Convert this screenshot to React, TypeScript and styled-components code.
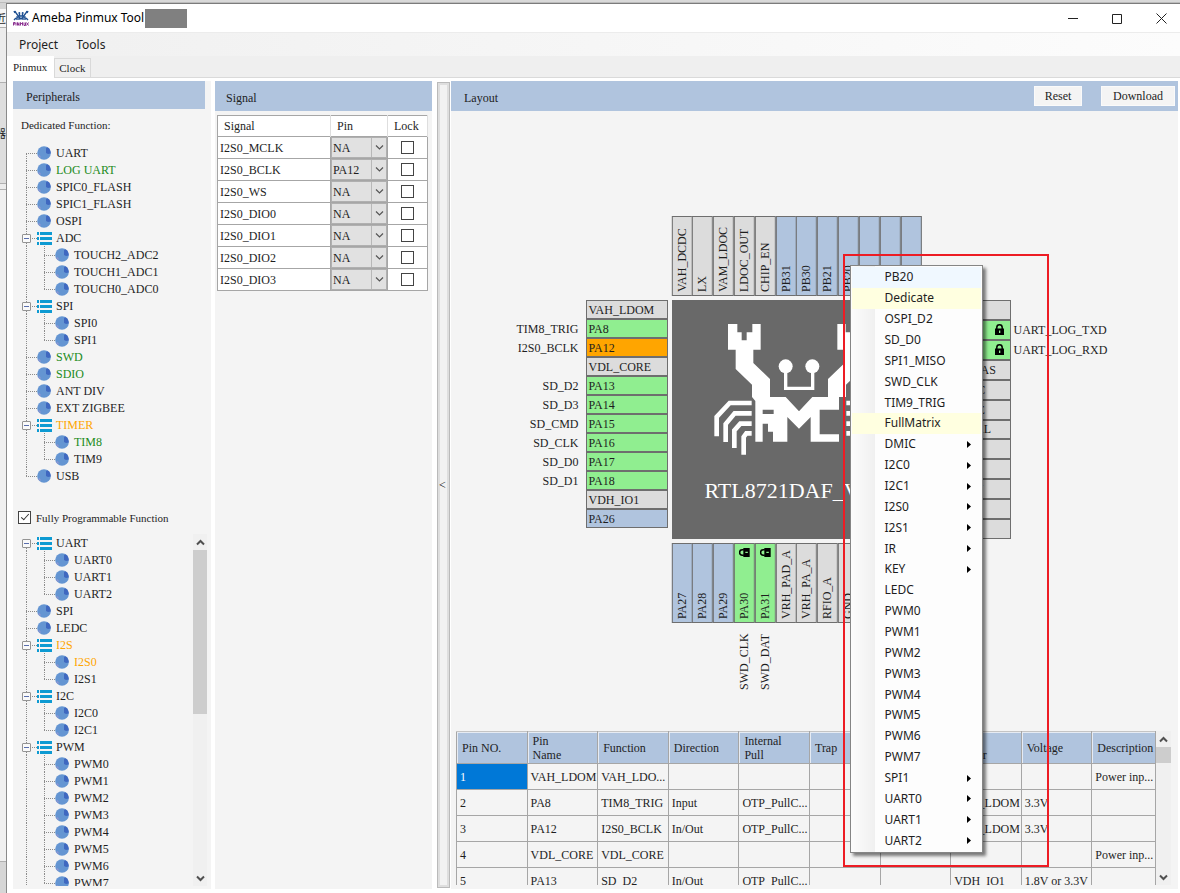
import React from "react";
import styled, { createGlobalStyle, css } from "styled-components";

const serif = '"Liberation Serif", "Times New Roman", serif';
const sans = '"Noto Sans", "Open Sans", "Noto Sans CJK SC", sans-serif';

const c = {
  panel: "#f4f4f4",
  header: "#b0c4de",
  ink: "#1e1e1e",
  grid: "#a6a6a6",
  chip: "#696969",
  green: "#90ee90",
  orange: "#ffa500",
  grey: "#dcdcdc",
};

const GlobalStyle = createGlobalStyle`
  *, *::before, *::after { box-sizing: border-box; }
  html, body { margin: 0; }
  body { font-family: ${serif}; font-size: 12px; line-height: 14px; color: ${c.ink}; overflow: hidden; }
  button, select, input { font: inherit; color: inherit; margin: 0; }
  ul { list-style: none; margin: 0; padding: 0; }
`;

/* ---------- window frame ---------- */

const Desktop = styled.div`
  display: grid;
  grid-template-columns: 6px minmax(0, 1fr);
  grid-template-rows: 3px minmax(0, 1fr);
  height: 100vh;
  background: #d9d9d9;
`;

const DesktopTop = styled.div`
  grid-column: 1 / -1;
  border-bottom: 1px solid #bcbcbc;
`;

const DesktopEdge = styled.div`
  display: flex;
  flex-direction: column;
  overflow: hidden;
  white-space: nowrap;
  font-family: "Noto Sans CJK SC", sans-serif;
  font-size: 11px;
`;

const EdgeBlock = styled.div<{ $h?: number; $bg: string; $line?: boolean }>`
  ${(p) => (p.$h ? `height: ${p.$h}px;` : "flex: 1;")}
  background: ${(p) => p.$bg};
  border-bottom: ${(p) => (p.$line ? "1px solid #b0b0b0" : "0")};
  display: flex;
  align-items: center;
  justify-content: flex-end;
`;

const Window = styled.div`
  display: flex;
  flex-direction: column;
  min-height: 0;
  background: #fff;
  border-top: 1px solid #7b7b7b;
  border-left: 1px solid #8a8a8a;
`;

const TitleBar = styled.header`
  display: flex;
  align-items: center;
  height: 28px;
  padding: 0 9px 0 6px;
  font-family: ${sans};
  color: #000;
`;

const TitleText = styled.h1`
  margin: 0 1px 0 3px;
  font-size: 12px;
  font-weight: 400;
  line-height: 20px;
`;

const Redacted = styled.span`
  width: 42px;
  height: 19px;
  background: #808080;
`;

const WindowControls = styled.div`
  display: flex;
  gap: 24px;
  margin-left: auto;
`;

const ControlButton = styled.button`
  display: grid;
  place-items: center;
  width: 20px;
  height: 20px;
  padding: 0;
  border: 0;
  background: none;
`;

const MenuBar = styled.nav`
  display: flex;
  gap: 18px;
  height: 24px;
  padding-left: 12px;
  border-top: 1px solid #ececec;
  background: linear-gradient(to right, #f0f0f0, #fcfcfc);
  font-family: ${sans};
`;

const MenuBarItem = styled.button`
  padding: 0;
  border: 0;
  background: none;
`;

const TabStrip = styled.div`
  display: flex;
  align-items: flex-end;
  height: 22px;
  background: #efefef;
  border-bottom: 1px solid #dadada;
`;

const Tab = styled.button<{ $active?: boolean }>`
  height: ${(p) => (p.$active ? 22 : 19)}px;
  margin-bottom: ${(p) => (p.$active ? -1 : 0)}px;
  padding: ${(p) => (p.$active ? "0 6px 2px 5px" : "0 4px")};
  border: 1px solid ${(p) => (p.$active ? "#fff" : "#d9d9d9")};
  border-bottom: 0;
  background: ${(p) => (p.$active ? "#fff" : "#f0f0f0")};
  font-size: 11px;
`;

const Workspace = styled.main`
  flex: 1;
  display: grid;
  grid-template-columns: 198px 217px 13px minmax(0, 1fr);
  min-height: 0;
  padding: 3px 2px 4px 6px;
`;

const Panel = styled.section`
  display: flex;
  flex-direction: column;
  min-width: 0;
  min-height: 0;
  background: ${c.panel};
`;

const PeripheralPanel = styled(Panel)`
  padding-bottom: 3px;
`;

const SignalPanel = styled(Panel)`
  margin: 0 -4px 0 4px;
`;

const LayoutPanel = styled(Panel)`
  margin-left: 10px;
`;

const PanelHeader = styled.div<{ $short?: boolean }>`
  display: flex;
  align-items: center;
  gap: 19px;
  flex: none;
  height: ${(p) => (p.$short ? 28 : 30)}px;
  margin-right: ${(p) => (p.$short ? 6 : 0)}px;
  padding: 0 3px 0 13px;
  background: ${c.header};
`;

const PanelTitle = styled.h2<{ $wide?: boolean }>`
  flex: 1;
  margin: 4px 0 0 ${(p) => (p.$wide ? 0 : -2)}px;
  font-size: 12px;
  font-weight: 400;
`;

const HeaderButton = styled.button<{ $w: number }>`
  width: ${(p) => p.$w}px;
  height: 20px;
  padding: 0;
  border: 1px solid #fafafa;
  background: ${c.panel};
`;

/* ---------- peripheral trees ---------- */

const SectionLabel = styled.p`
  margin: 9px 8px 11px;
  font-size: 11px;
  line-height: 15px;
`;

const CheckLabel = styled.label`
  display: flex;
  align-items: flex-start;
  gap: 5px;
  height: 50px;
  padding: 27px 5px 0;
  font-size: 11px;
`;

const CheckBox = styled.input`
  appearance: none;
  position: relative;
  width: 13px;
  height: 13px;
  border: 1px solid #444;
  background: #fff;
  vertical-align: middle;

  &:checked::after {
    content: "";
    position: absolute;
    left: 4px;
    top: 0;
    width: 4px;
    height: 8px;
    border: solid #333;
    border-width: 0 1px 1px 0;
    transform: rotate(42deg);
  }
`;

const TreeList = styled.ul`
  padding-left: 5px;
`;

const TreeRow = styled.li<{ $tone?: Tone }>`
  display: flex;
  align-items: center;
  height: 17px;
  color: ${(p) => (p.$tone === "used" ? "#228b22" : p.$tone === "warn" ? "#ffa500" : c.ink)};
`;

type Line = "none" | "through" | "tee" | "start" | "end";

const Gutter = styled.span<{ $line: Line }>`
  position: relative;
  flex: none;
  width: 18px;
  height: 17px;

  &::before {
    content: "";
    position: absolute;
    left: 8px;
    top: ${(p) => (p.$line === "start" ? 9 : 0)}px;
    height: ${(p) => (p.$line === "end" ? 9 : p.$line === "start" ? 8 : 17)}px;
    border-left: ${(p) => (p.$line === "none" ? "0" : "1px dotted #8c8c8c")};
  }
  &::after {
    content: "";
    position: absolute;
    left: 8px;
    right: -1px;
    top: 9px;
    border-top: ${(p) => (p.$line === "none" || p.$line === "through" ? "0" : "1px dotted #8c8c8c")};
  }
`;

const Expander = styled.button`
  position: absolute;
  z-index: 1;
  left: 4px;
  top: 5px;
  width: 9px;
  height: 9px;
  padding: 0;
  border: 1px solid #949494;
  border-radius: 1px;
  background: linear-gradient(#5a6fae, #5a6fae) center / 5px 1px no-repeat #fafafa;
`;

const NodeIcon = styled.svg`
  flex: none;
  width: 14px;
  height: 14px;
  margin: 0 5px 0 1px;
`;

const GroupIcon = styled(NodeIcon)`
  width: 16px;
  height: 14px;
  margin: 0 4px 0 0;
`;

const NodeLabel = styled.span`
  white-space: nowrap;
`;

const ScrollTree = styled.div`
  flex: 1;
  display: grid;
  grid-template-columns: minmax(0, 1fr) 14px;
  min-height: 0;
  margin-right: 4px;
  overflow: hidden;
`;

const Clip = styled.div`
  min-height: 0;
  overflow: hidden;
`;

const ScrollBar = styled.div`
  display: flex;
  flex-direction: column;
  min-height: 0;
  background: #f0f0f0;
`;

const ScrollArrow = styled.button`
  display: grid;
  place-items: center;
  flex: none;
  height: 16px;
  padding: 0;
  border: 0;
  background: none;
`;

const ScrollThumb = styled.div<{ $h: string }>`
  height: ${(p) => p.$h};
  background: #cdcdcd;
`;

const ScrollSpace = styled.div`
  flex: 1;
`;

type Tone = "used" | "warn";
type Node = { name: string; tone?: Tone; children?: Node[] };

const n = (name: string, tone?: Tone): Node => ({ name, tone });

const dedicated: Node[] = [
  n("UART"),
  n("LOG UART", "used"),
  n("SPIC0_FLASH"),
  n("SPIC1_FLASH"),
  n("OSPI"),
  { name: "ADC", children: [n("TOUCH2_ADC2"), n("TOUCH1_ADC1"), n("TOUCH0_ADC0")] },
  { name: "SPI", children: [n("SPI0"), n("SPI1")] },
  n("SWD", "used"),
  n("SDIO", "used"),
  n("ANT DIV"),
  n("EXT ZIGBEE"),
  { name: "TIMER", tone: "warn", children: [n("TIM8", "used"), n("TIM9")] },
  n("USB"),
];

const programmable: Node[] = [
  { name: "UART", children: [n("UART0"), n("UART1"), n("UART2")] },
  n("SPI"),
  n("LEDC"),
  { name: "I2S", tone: "warn", children: [n("I2S0", "warn"), n("I2S1")] },
  { name: "I2C", children: [n("I2C0"), n("I2C1")] },
  { name: "PWM", children: [0, 1, 2, 3, 4, 5, 6, 7].map((i) => n("PWM" + i)) },
];

function LeafMark() {
  return (
    <NodeIcon viewBox="0 0 14 14" aria-hidden>
      <circle cx="7" cy="7" r="6.8" fill="#6495d2" />
      <path d="M9 7V2.200L10.500 1.200A6.800 6.800 0 0 1 13.700 7.500L11 8Z" fill="#3f68c0" />
      <path d="M2.500 9l1.500 2-1 1A6.800 6.800 0 0 1 1 10Z" fill="#8a96d2" />
    </NodeIcon>
  );
}

function GroupMark() {
  return (
    <GroupIcon viewBox="0 0 16 14" aria-hidden>
      <path d="M1 1h2v3H1zM4 1h12v3H4zM1 6h2v3H1zM4 6h12v3H4zM1 11h2v3H1zM4 11h12v3H4z" fill="#0d9ad2" />
    </GroupIcon>
  );
}

function Tree({ nodes, label, open }: { nodes: Node[]; label: string; open?: boolean }) {
  const lastRoot = nodes.length - 1;
  return (
    <TreeList aria-label={label}>
      {nodes.map((node, i) => {
        const isLast = i === lastRoot && !open;
        const line: Line = i === 0 ? "start" : isLast ? "end" : "tee";
        return (
          <React.Fragment key={node.name}>
            <TreeRow $tone={node.tone}>
              <Gutter $line={line}>
                {node.children && <Expander aria-label={`Collapse ${node.name}`} />}
              </Gutter>
              {node.children ? <GroupMark /> : <LeafMark />}
              <NodeLabel>{node.name}</NodeLabel>
            </TreeRow>
            {node.children?.map((kid, k) => (
              <TreeRow key={kid.name} $tone={kid.tone}>
                <Gutter $line={isLast ? "none" : "through"} />
                <Gutter $line={k === node.children!.length - 1 ? "end" : "tee"} />
                <LeafMark />
                <NodeLabel>{kid.name}</NodeLabel>
              </TreeRow>
            ))}
          </React.Fragment>
        );
      })}
    </TreeList>
  );
}

function Chevron({ dir, size = 9, color = "#505050", weight = 2 }: { dir: "up" | "down"; size?: number; color?: string; weight?: number }) {
  return (
    <svg width={size} height={size} viewBox="0 0 9 9" fill="none" stroke={color} strokeWidth={weight} aria-hidden>
      <path d={dir === "up" ? "M1 6.500L4.500 3L8 6.500" : "M1 2.500L4.500 6L8 2.500"} />
    </svg>
  );
}

function Scroller({ thumb }: { thumb: string }) {
  return (
    <ScrollBar>
      <ScrollArrow aria-label="Scroll up">
        <Chevron dir="up" />
      </ScrollArrow>
      <ScrollThumb $h={thumb} />
      <ScrollSpace />
      <ScrollArrow aria-label="Scroll down">
        <Chevron dir="down" />
      </ScrollArrow>
    </ScrollBar>
  );
}

/* ---------- signal table ---------- */

const SignalTable = styled.table`
  width: 211px;
  margin: 4px 0 0 2px;
  border-collapse: collapse;
  table-layout: fixed;
  background: #fff;
  border: 1px solid ${c.grid};

  col:nth-child(2) { width: 57px; }
  col:nth-child(3) { width: 40px; }

  th {
    height: 21px;
    padding: 0 6px;
    border-right: 1px solid #dedede;
    text-align: left;
    font-weight: 400;
  }
  td {
    height: 22px;
    padding: 0 0 0 2px;
    border: 1px solid ${c.grid};
  }
  td:nth-child(2) { padding: 0; }
  td:nth-child(3) { padding: 0 0 1px; text-align: center; line-height: 13px; }
`;

const SelectBox = styled.span`
  display: grid;
  grid-template-columns: 1fr 15px;
  align-items: stretch;
  height: 21px;
  border: 1px solid #b0b0b0;
  background: #e1e1e1;
`;

const PinSelect = styled.select`
  appearance: none;
  min-width: 0;
  padding: 0 0 0 1px;
  border: 0;
  background: none;
`;

const SelectArrow = styled.span`
  display: grid;
  place-items: center;
  border-left: 1px solid #b8b8b8;
  pointer-events: none;
`;

const signals = [
  ["I2S0_MCLK", "NA"],
  ["I2S0_BCLK", "PA12"],
  ["I2S0_WS", "NA"],
  ["I2S0_DIO0", "NA"],
  ["I2S0_DIO1", "NA"],
  ["I2S0_DIO2", "NA"],
  ["I2S0_DIO3", "NA"],
];

const Splitter = styled.button`
  z-index: 1;
  margin: 1px -9px 1px 9px;
  padding: 0 2px 0 0;
  border: 1px solid #bababa;
  background: #f2f2f2;
  box-shadow: inset 0 0 0 2px #dedede;
  font-size: 12px;
  color: #000;
`;

/* ---------- chip diagram ---------- */

const Diagram = styled.div`
  flex: 1;
  display: grid;
  grid-template-columns: minmax(0, 1fr) 250px minmax(0, 1fr);
  grid-template-rows: 80px 239px auto;
  gap: 4px;
  min-height: 0;
  padding: 105px 36px 0 0;
`;

const TopPins = styled.div`
  grid-column: 2;
  display: flex;
`;

const SidePins = styled.ul<{ $side: "left" | "right" }>`
  grid-row: 2;
  grid-column: ${(p) => (p.$side === "left" ? 1 : 3)};
  display: flex;
  flex-direction: column;

  li {
    display: flex;
    align-items: center;
    gap: ${(p) => (p.$side === "left" ? 7 : 3)}px;
    justify-content: ${(p) => (p.$side === "left" ? "flex-end" : "flex-start")};
    ${(p) => (p.$side === "left" ? "height: 19px;" : "flex: 1;")}
  }
`;

type PinKind = "power" | "free" | "used" | "active";

const pinFill = {
  power: c.grey,
  free: c.header,
  used: c.green,
  active: c.orange,
};

const PinBox = styled.span<{ $kind: PinKind; $w: number; $inset: number }>`
  display: flex;
  align-items: center;
  justify-content: space-between;
  align-self: stretch;
  width: ${(p) => p.$w}px;
  padding: 0 5px 0 ${(p) => p.$inset}px;
  border: 1px solid #6e6e6e;
  background: ${(p) => pinFill[p.$kind]};
`;

const upright = css`
  writing-mode: vertical-rl;
  transform: rotate(180deg);
  white-space: nowrap;
`;

const PinColumn = styled.div`
  flex: 1;
  min-width: 0;
`;

const VerticalPin = styled.div<{ $kind: PinKind }>`
  ${upright}
  display: flex;
  align-items: center;
  justify-content: space-between;
  width: 100%;
  height: 80px;
  padding: 3px 0;
  border: 1px solid #6e6e6e;
  background: ${(p) => pinFill[p.$kind]};
  overflow: hidden;
`;

const VerticalNet = styled.div`
  ${upright}
  display: flex;
  align-items: center;
  width: 100%;
  height: 67px;
`;

const BottomPins = styled(TopPins)`
  grid-row: 3;
`;

const Chip = styled.div`
  position: relative;
  grid-row: 2;
  grid-column: 2;
  background: ${c.chip};
`;

const ChipFace = styled.div`
  display: flow-root;
`;

const ChipArt = styled.svg`
  display: block;
  width: 170px;
  height: 132px;
  margin: 24px 0 0 42px;
`;

const ChipName = styled.div`
  margin-top: 23px;
  padding-left: 33px;
  color: #fff;
  font-size: 22px;
  line-height: 24px;
  white-space: nowrap;
`;

const Highlight = styled.div`
  position: absolute;
  z-index: 3;
  left: 171px;
  top: -46px;
  width: 206px;
  height: 613px;
  border: 2px solid #ed1c24;
  pointer-events: none;
`;

const ContextMenu = styled.div`
  position: absolute;
  z-index: 4;
  left: 178px;
  top: -35px;
  display: flex;
  flex-direction: column;
  width: 133px;
  height: 588px;
  padding: 1px;
  border: 1px solid #858585;
  background: linear-gradient(to right, #fcfcfc, #f0f0f0 24px, #fdfdfd 24px);
  box-shadow: 3px 3px 3px rgba(0, 0, 0, 0.5);
  font-family: ${sans};
`;

const MenuItem = styled.button<{ $bg?: string }>`
  flex: 1;
  display: flex;
  align-items: center;
  justify-content: space-between;
  padding: 0 10px 0 33px;
  border: 0;
  background: ${(p) => p.$bg ?? "transparent"};
  line-height: 16px;
`;

type Pin = { name?: string; kind: PinKind; net?: string; lock?: boolean };
const p = (kind: PinKind, name?: string, net?: string, lock?: boolean): Pin => ({ kind, name, net, lock });

const topPins: Pin[] = [
  p("power", "VAH_DCDC"),
  p("power", "LX"),
  p("power", "VAM_LDOC"),
  p("power", "LDOC_OUT"),
  p("power", "CHIP_EN"),
  p("free", "PB31"),
  p("free", "PB30"),
  p("free", "PB21"),
  p("free", "PB20"),
  p("free"),
  p("free"),
  p("free"),
];

const leftPins: Pin[] = [
  p("power", "VAH_LDOM"),
  p("used", "PA8", "TIM8_TRIG"),
  p("active", "PA12", "I2S0_BCLK"),
  p("power", "VDL_CORE"),
  p("used", "PA13", "SD_D2"),
  p("used", "PA14", "SD_D3"),
  p("used", "PA15", "SD_CMD"),
  p("used", "PA16", "SD_CLK"),
  p("used", "PA17", "SD_D0"),
  p("used", "PA18", "SD_D1"),
  p("power", "VDH_IO1"),
  p("free", "PA26"),
];

const rightPins: Pin[] = [
  p("power"),
  p("used", "", "UART_LOG_TXD", true),
  p("used", "", "UART_LOG_RXD", true),
  p("power", "AVDD_BIAS"),
  p("power", "VAH_ADC"),
  p("power", "VD_CORE"),
  p("power", "VAH_XTAL"),
  p("power"),
  p("power"),
  p("power", "VAH_RFN"),
  p("power", "VDH_INT"),
  p("power"),
];

const bottomPins: Pin[] = [
  p("free", "PA27"),
  p("free", "PA28"),
  p("free", "PA29"),
  p("used", "PA30", "SWD_CLK", true),
  p("used", "PA31", "SWD_DAT", true),
  p("power", "VRH_PAD_A"),
  p("power", "VRH_PA_A"),
  p("power", "RFIO_A"),
  p("power", "GND"),
  p("power"),
  p("power"),
  p("power"),
];

const menuItems = [
  "PB20", "Dedicate", "OSPI_D2", "SD_D0", "SPI1_MISO", "SWD_CLK", "TIM9_TRIG", "FullMatrix",
  "DMIC", "I2C0", "I2C1", "I2S0", "I2S1", "IR", "KEY", "LEDC",
  "PWM0", "PWM1", "PWM2", "PWM3", "PWM4", "PWM5", "PWM6", "PWM7",
  "SPI1", "UART0", "UART1", "UART2",
];
const withSubmenu = new Set(["DMIC", "I2C0", "I2C1", "I2S0", "I2S1", "IR", "KEY", "SPI1", "UART0", "UART1", "UART2"]);
const itemFill: Record<string, string> = { PB20: "#f0f8ff", Dedicate: "#ffffe0", FullMatrix: "#ffffe0" };

function LockMark({ turned }: { turned?: boolean }) {
  return (
    <svg width="11" height="11" viewBox="0 0 11 11" aria-hidden transform={turned ? "rotate(90)" : undefined}>
      <path d="M2.800 5V3.500a2.700 2.700 0 0 1 5.400 0V5" fill="none" stroke="#000" strokeWidth="1.500" />
      <path d="M1 4.500h9V11H1z" fill="#000" />
      <path d="M5 6.500h1.300v2.500H5z" fill="#90ee90" />
    </svg>
  );
}

function Crab() {
  const legs = "M156 280H90L51 322V380M156 311H105L78 343V397M156 342H122L104 362V415M156 371H140L132 382V435";
  return (
    <ChipArt viewBox="43 43 510 396" role="img" aria-label="Ameba crab">
      <path
        fill="#fff"
        fillRule="evenodd"
        d="M85 43H113V68H126V92H141V68H158V43H183V120H161V160L211 208V262H258L298 305L338 262H385V208L435 160V120H413V43H438V68H455V92H470V68H483V43H511V120H488V178L439 225V262H418V300H360V374H418V396H333V322L298 357L263 322V396H220V366H205V342H189V396H167V274L157 262V225L108 178V120H85ZM189 300V313H222V300Z"
      />
      <circle cx="258" cy="170" r="21" fill="#fff" />
      <circle cx="338" cy="170" r="21" fill="#fff" />
      <path d="M258 185V236H339V185" fill="none" stroke="#fff" strokeWidth="10" />
      <g fill="none" stroke="#fff" strokeWidth="14">
        <path d={legs} />
        <path d={legs} transform="translate(596 0) scale(-1 1)" />
      </g>
    </ChipArt>
  );
}

/* ---------- pin table ---------- */

const PinTableArea = styled.div`
  flex: none;
  display: grid;
  grid-template-columns: minmax(0, 1fr) 15px;
  height: 154px;
  margin: 0 7px 4px 5px;
`;

const PinTable = styled.table`
  width: 100%;
  border-collapse: collapse;
  table-layout: fixed;

  col { width: 10.100%; }
  col:last-child { width: 9.100%; }

  th {
    height: 32px;
    padding: 1px 4px 0 5px;
    border: 1px solid ${c.grid};
    border-top-color: #c4c4c4;
    background: ${c.header};
    box-shadow: inset 1px 1px 0 #e6ebf3;
    text-align: left;
    font-weight: 400;
  }
  td {
    height: 26px;
    padding: 0 1px 0 3px;
    border: 1px solid ${c.grid};
    white-space: nowrap;
    overflow: hidden;
  }
`;

const PinNumber = styled.td<{ $selected?: boolean }>`
  ${(q) => q.$selected && "background: #0078d7; color: #fff;"}
`;

const columns = ["Pin NO.", "Pin\nName", "Function", "Direction", "Internal\nPull", "Trap", "", "IO\nPower", "Voltage", "Description"];

const HeadText = styled.span`
  white-space: pre;
`;

const rows = [
  ["1", "VAH_LDOM", "VAH_LDO...", "", "", "", "", "", "", "Power inp..."],
  ["2", "PA8", "TIM8_TRIG", "Input", "OTP_PullC...", "", "", "VAH_LDOM", "3.3V", ""],
  ["3", "PA12", "I2S0_BCLK", "In/Out", "OTP_PullC...", "", "", "VAH_LDOM", "3.3V", ""],
  ["4", "VDL_CORE", "VDL_CORE", "", "", "", "", "", "", "Power inp..."],
  ["5", "PA13", "SD_D2", "In/Out", "OTP_PullC...", "", "", "VDH_IO1", "1.8V or 3.3V", ""],
];

function AppLogo() {
  return (
    <svg width="16" height="17" viewBox="0 0 16 17" aria-hidden>
      <g fill="none" stroke="#1d4f91" strokeWidth="1.400">
        <path d="M2 1l1 2 3 4M14 1l-1 2-3 4M1 1l1 2M15 1l-1 2M6.500 3.500V6h3V3.500" />
        <path d="M4 10V7h2l2 2 2-2h2v3M1 10l2-2M15 10l-2-2M6 10V8M10 10V8" />
      </g>
      <circle cx="6.300" cy="3" r="1" fill="#1d4f91" />
      <circle cx="9.700" cy="3" r="1" fill="#1d4f91" />
      <path d="M.5 15.500v-3h1.500v1.500H1M3 12.500v3M4.500 15.500v-3l1.500 3v-3M7.500 15.500v-3l1 1.500 1-1.500v3M11 12.500v3h1.500v-3M13.500 12.500l2 3M15.500 12.500l-2 3" fill="none" stroke="#8a2f8f" strokeWidth="1" />
    </svg>
  );
}

export default function App() {
  return (
    <>
      <GlobalStyle />
      <Desktop>
        <DesktopTop />
        <DesktopEdge aria-hidden>
          <EdgeBlock $h={6} $bg="#d4d4d4" />
          <EdgeBlock $h={19} $bg="#f6f6f6" $line>近</EdgeBlock>
          <EdgeBlock $h={55} $bg="#ececec" $line />
          <EdgeBlock $h={101} $bg="#dedede" $line>器</EdgeBlock>
          <EdgeBlock $h={6} $bg="#ececec" $line />
          <EdgeBlock $bg="#f0f0f0" $line />
          <EdgeBlock $h={31} $bg="#d6d6d6" />
        </DesktopEdge>
        <Window>
          <TitleBar>
            <AppLogo />
            <TitleText>Ameba Pinmux Tool</TitleText>
            <Redacted />
            <WindowControls>
              <ControlButton aria-label="Minimize">
                <svg width="11" height="11" viewBox="0 0 11 11"><path d="M0 5.500h10" stroke="#222" /></svg>
              </ControlButton>
              <ControlButton aria-label="Maximize">
                <svg width="11" height="11" viewBox="0 0 11 11"><path d="M.5 1.500h9v9h-9z" fill="none" stroke="#222" /></svg>
              </ControlButton>
              <ControlButton aria-label="Close">
                <svg width="11" height="11" viewBox="0 0 11 11"><path d="M.5.5l10 10M10.500.5l-10 10" stroke="#222" /></svg>
              </ControlButton>
            </WindowControls>
          </TitleBar>
          <MenuBar>
            <MenuBarItem>Project</MenuBarItem>
            <MenuBarItem>Tools</MenuBarItem>
          </MenuBar>
          <TabStrip>
            <Tab $active>Pinmux</Tab>
            <Tab>Clock</Tab>
          </TabStrip>
          <Workspace>
            <PeripheralPanel>
              <PanelHeader $short>
                <PanelTitle $wide>Peripherals</PanelTitle>
              </PanelHeader>
              <SectionLabel>Dedicated Function:</SectionLabel>
              <Tree nodes={dedicated} label="Dedicated functions" />
              <CheckLabel>
                <CheckBox type="checkbox" defaultChecked />
                Fully Programmable Function
              </CheckLabel>
              <ScrollTree>
                <Clip>
                  <Tree nodes={programmable} label="Programmable functions" open />
                </Clip>
                <Scroller thumb="164px" />
              </ScrollTree>
            </PeripheralPanel>

            <SignalPanel>
              <PanelHeader>
                <PanelTitle>Signal</PanelTitle>
              </PanelHeader>
              <SignalTable>
                <colgroup>
                  <col />
                  <col />
                  <col />
                </colgroup>
                <thead>
                  <tr>
                    <th>Signal</th>
                    <th>Pin</th>
                    <th>Lock</th>
                  </tr>
                </thead>
                <tbody>
                  {signals.map(([name, pin]) => (
                    <tr key={name}>
                      <td>{name}</td>
                      <td>
                        <SelectBox>
                          <PinSelect aria-label={`Pin for ${name}`} defaultValue={pin}>
                            <option>{pin}</option>
                          </PinSelect>
                          <SelectArrow>
                            <Chevron dir="down" weight={1.2} color="#555" />
                          </SelectArrow>
                        </SelectBox>
                      </td>
                      <td>
                        <CheckBox type="checkbox" aria-label={`Lock ${name}`} />
                      </td>
                    </tr>
                  ))}
                </tbody>
              </SignalTable>
            </SignalPanel>

            <Splitter aria-label="Collapse side panels">&lt;</Splitter>

            <LayoutPanel>
              <PanelHeader>
                <PanelTitle $wide>Layout</PanelTitle>
                <HeaderButton $w={48}>Reset</HeaderButton>
                <HeaderButton $w={74}>Download</HeaderButton>
              </PanelHeader>
              <Diagram>
                <TopPins>
                  {topPins.map((pin, i) => (
                    <PinColumn key={i}>
                      <VerticalPin $kind={pin.kind}>{pin.name}</VerticalPin>
                    </PinColumn>
                  ))}
                </TopPins>
                <SidePins $side="left">
                  {leftPins.map((pin, i) => (
                    <li key={i}>
                      {pin.net}
                      <PinBox $kind={pin.kind} $w={82} $inset={2}>{pin.name}</PinBox>
                    </li>
                  ))}
                </SidePins>
                <Chip>
                  <ChipFace>
                    <Crab />
                    <ChipName>RTL8721DAF_VT2</ChipName>
                  </ChipFace>
                  <Highlight />
                  <ContextMenu role="menu">
                    {menuItems.map((item) => (
                      <MenuItem key={item} role="menuitem" $bg={itemFill[item]}>
                        {item}
                        {withSubmenu.has(item) && (
                          <svg width="4" height="7" viewBox="0 0 4 7" aria-hidden><path d="M0 0l4 3.500L0 7z" fill="#000" /></svg>
                        )}
                      </MenuItem>
                    ))}
                  </ContextMenu>
                </Chip>
                <SidePins $side="right">
                  {rightPins.map((pin, i) => (
                    <li key={i}>
                      <PinBox $kind={pin.kind} $w={85} $inset={3}>
                        <span>{pin.name}</span>
                        {pin.lock && <LockMark />}
                      </PinBox>
                      {pin.net}
                    </li>
                  ))}
                </SidePins>
                <BottomPins>
                  {bottomPins.map((pin, i) => (
                    <PinColumn key={i}>
                      <VerticalPin $kind={pin.kind}>
                        {pin.name}
                        {pin.lock && <LockMark turned />}
                      </VerticalPin>
                      {pin.net && <VerticalNet>{pin.net}</VerticalNet>}
                    </PinColumn>
                  ))}
                </BottomPins>
              </Diagram>
              <PinTableArea>
                <Clip>
                  <PinTable>
                    <colgroup>
                      {columns.map((_, i) => (
                        <col key={i} />
                      ))}
                    </colgroup>
                    <thead>
                      <tr>
                        {columns.map((name, i) => (
                          <th key={i}>
                            <HeadText>{name}</HeadText>
                          </th>
                        ))}
                      </tr>
                    </thead>
                    <tbody>
                      {rows.map(([no, ...cells], r) => (
                        <tr key={no}>
                          <PinNumber $selected={r === 0}>{no}</PinNumber>
                          {cells.map((cell, i) => (
                            <td key={i}>{cell}</td>
                          ))}
                        </tr>
                      ))}
                    </tbody>
                  </PinTable>
                </Clip>
                <Scroller thumb="16px" />
              </PinTableArea>
            </LayoutPanel>
          </Workspace>
        </Window>
      </Desktop>
    </>
  );
}
